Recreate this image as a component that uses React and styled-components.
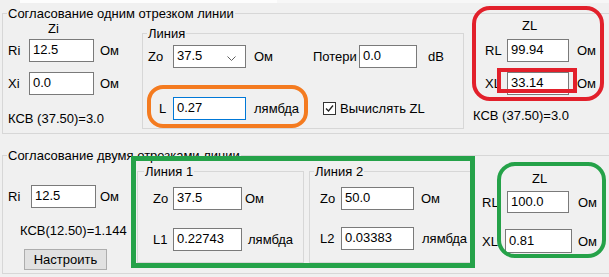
import React from "react";
import styled, { createGlobalStyle } from "styled-components";

const GlobalStyle = createGlobalStyle`
  * { box-sizing: border-box; }
  body {
    margin: 0;
    background: #f0f0f0;
    font-family: "Liberation Sans", Arial, sans-serif;
    font-size: 13px;
    color: #000;
  }
`;

const Page = styled.div`
  position: relative;
  width: 609px;
  height: 277px;
  overflow: hidden;
`;

const TopStrip = styled.div`
  height: 3px;
  background: linear-gradient(to right, #f0f0f0 0 20px, #fdfdfd 20px 277px, #f7f7f7 277px);
`;

const Group = styled.fieldset`
  margin: ${p => p.$mt || 0}px 0 0 ${p => p.$ml || 0}px;
  padding: 0;
  border: 1px solid #d7d7d7;
  width: ${p => p.$w}px;
  height: ${p => p.$h}px;
  min-width: 0;
  flex: none;
`;

const Caption = styled.legend`
  margin-left: ${p => p.$ml || 4}px;
  padding: 0 1px;
  line-height: 15px;
  font-size: 13px;
`;

const Columns = styled.div`
  display: flex;
  align-items: flex-start;
`;

const Section = styled.div`
  display: flex;
  flex-direction: column;
  flex: none;
  width: ${p => (p.$w ? `${p.$w}px` : "auto")};
  margin: ${p => p.$mt || 0}px 0 0 ${p => p.$ml || 0}px;
  padding-left: ${p => p.$pl || 0}px;
`;

const Row = styled.div`
  display: flex;
  align-items: center;
  height: ${p => p.$h || 23}px;
  margin-top: ${p => p.$mt || 0}px;
  padding-left: ${p => p.$pl || 0}px;
`;

const Label = styled.span`
  flex: none;
  width: ${p => p.$w}px;
  padding-left: ${p => p.$pl || 0}px;
  white-space: nowrap;
`;

const Box = styled.div`
  position: relative;
  flex: none;
  width: ${p => p.$w}px;
  height: 100%;
  display: flex;
  align-items: center;
  padding: 0 0 2px 3px;
  background: #fff;
  border: 1px solid ${p => (p.$focus ? "#0078d7" : "#7a7a7a")};
  white-space: nowrap;
`;

const Chevron = styled.svg`
  position: absolute;
  right: 9px;
  top: 10px;
`;

const Unit = styled.span`
  flex: none;
  margin-left: ${p => p.$ml || 0}px;
  width: ${p => (p.$w ? `${p.$w}px` : "auto")};
  white-space: nowrap;
`;

const Text = styled.div`
  margin-top: ${p => p.$mt || 0}px;
  padding-left: ${p => p.$pl || 0}px;
  line-height: 15px;
  white-space: nowrap;
`;

const Check = styled.label`
  display: flex;
  align-items: center;
  gap: 4px;
`;

const Button = styled.div`
  width: 83px;
  height: 21px;
  margin: ${p => p.$mt || 0}px 0 0 ${p => p.$ml || 0}px;
  background: #e1e1e1;
  border: 1px solid #adadad;
  display: flex;
  align-items: center;
  justify-content: center;
`;

const Mark = styled.div`
  position: absolute;
  left: ${p => p.$x}px;
  top: ${p => p.$y}px;
  width: ${p => p.$w}px;
  height: ${p => p.$h}px;
  border: ${p => p.$b || 4}px solid ${p => p.$c};
  border-radius: ${p => p.$r || 0}px;
  pointer-events: none;
`;

const Field = ({ label, lw, lpl, value, w, unit, uml, uw, focus }) => (
  <>
    <Label $w={lw} $pl={lpl}>{label}</Label>
    <Box $w={w} $focus={focus}>{value}</Box>
    <Unit $ml={uml} $w={uw}>{unit}</Unit>
  </>
);

export default function App() {
  return (
    <Page>
      <GlobalStyle />
      <TopStrip />

      <Group $mt={3} $ml={2} $w={640} $h={128}>
        <Caption>Согласование одним отрезком линии</Caption>
        <Columns>
          <Section $w={139} $pl={5}>
            <Text $pl={40}>Zi</Text>
            <Row $mt={3}>
              <Field label="Ri" lw={21} value="12.5" w={65} unit="Ом" uml={6} />
            </Row>
            <Row $mt={10}>
              <Field label="Xi" lw={21} value="0.0" w={65} unit="Ом" uml={6} />
            </Row>
            <Text $mt={16}>КСВ (37.50)=3.0</Text>
          </Section>

          <Group $mt={5} $w={322} $h={103}>
            <Caption>Линия</Caption>
            <Row $mt={4} $pl={5}>
              <Label $w={25}>Zo</Label>
              <Box $w={73}>
                37.5
                <Chevron width="9" height="5" viewBox="0 0 9 5">
                  <path d="M0.5 0.5 L4.5 4.5 L8.5 0.5" fill="none" stroke="#606060" strokeWidth="1" />
                </Chevron>
              </Box>
              <Unit $ml={8} $w={59}>Ом</Unit>
              <Field label="Потери" lw={46} value="0.0" w={58} unit="dB" uml={11} />
            </Row>
            <Row $mt={29} $pl={5}>
              <Field label="L" lw={25} lpl={11} value="0.27" w={73} unit="лямбда" uml={8} uw={69} focus />
              <Check>
                <svg width="13" height="13" viewBox="0 0 13 13">
                  <rect x="0.5" y="0.5" width="12" height="12" fill="#fff" stroke="#333" />
                  <path d="M3 6.5 L5.5 9 L10 3.5" fill="none" stroke="#222" strokeWidth="1.3" />
                </svg>
                Вычислять ZL
              </Check>
            </Row>
          </Group>

          <Section $ml={9} $mt={-3}>
            <Text $pl={49}>ZL</Text>
            <Row $mt={6} $pl={12}>
              <Field label="RL" lw={22} value="99.94" w={62} unit="Ом" uml={8} />
            </Row>
            <Row $mt={10} $pl={12}>
              <Field label="XL" lw={22} value="33.14" w={62} unit="Ом" uml={8} />
            </Row>
            <Text $mt={13}>КСВ (37.50)=3.0</Text>
          </Section>
        </Columns>
      </Group>

      <Group $mt={14} $ml={2} $w={640} $h={126}>
        <Caption>Согласование двумя отрезками линии</Caption>
        <Columns>
          <Section $w={134} $pl={5}>
            <Row $mt={22}>
              <Field label="Ri" lw={23} value="12.5" w={65} unit="Ом" uml={4} />
            </Row>
            <Text $mt={15} $pl={12}>КСВ(12.50)=1.144</Text>
            <Button $mt={11} $ml={16}>Настроить</Button>
          </Section>

          <Group $mt={1} $w={167} $h={99}>
            <Caption $ml={6}>Линия 1</Caption>
            <Row $mt={8} $pl={15}>
              <Field label="Zo" lw={20} value="37.5" w={69} unit="Ом" uml={3} />
            </Row>
            <Row $mt={18} $pl={15}>
              <Field label="L1" lw={20} value="0.22743" w={69} unit="лямбда" uml={6} />
            </Row>
          </Group>

          <Group $mt={1} $ml={5} $w={162} $h={99}>
            <Caption $ml={4}>Линия 2</Caption>
            <Row $mt={8} $pl={10}>
              <Field label="Zo" lw={21} value="50.0" w={73} unit="Ом" uml={7} />
            </Row>
            <Row $mt={17} $pl={10}>
              <Field label="L2" lw={21} value="0.03383" w={73} unit="лямбда" uml={8} />
            </Row>
          </Group>

          <Section $mt={8}>
            <Text $pl={61}>ZL</Text>
            <Row $mt={5} $h={22} $pl={11}>
              <Field label="RL" lw={25} value="100.0" w={62} unit="Ом" uml={9} />
            </Row>
            <Row $mt={16} $h={24} $pl={11}>
              <Field label="XL" lw={23} value="0.81" w={67} unit="Ом" uml={6} />
            </Row>
          </Section>
        </Columns>
      </Group>

      <Mark $x={147} $y={85} $w={161} $h={43} $r={16} $c="#f47b20" />
      <Mark $x={472} $y={6} $w={132} $h={95} $r={18} $c="#e2202b" />
      <Mark $x={497} $y={68} $w={80} $h={25} $c="#e2202b" />
      <Mark $x={131} $y={156} $w={344} $h={112} $b={5} $c="#25a249" />
      <Mark $x={497} $y={162} $w={109} $h={96} $r={18} $c="#25a249" />
    </Page>
  );
}
